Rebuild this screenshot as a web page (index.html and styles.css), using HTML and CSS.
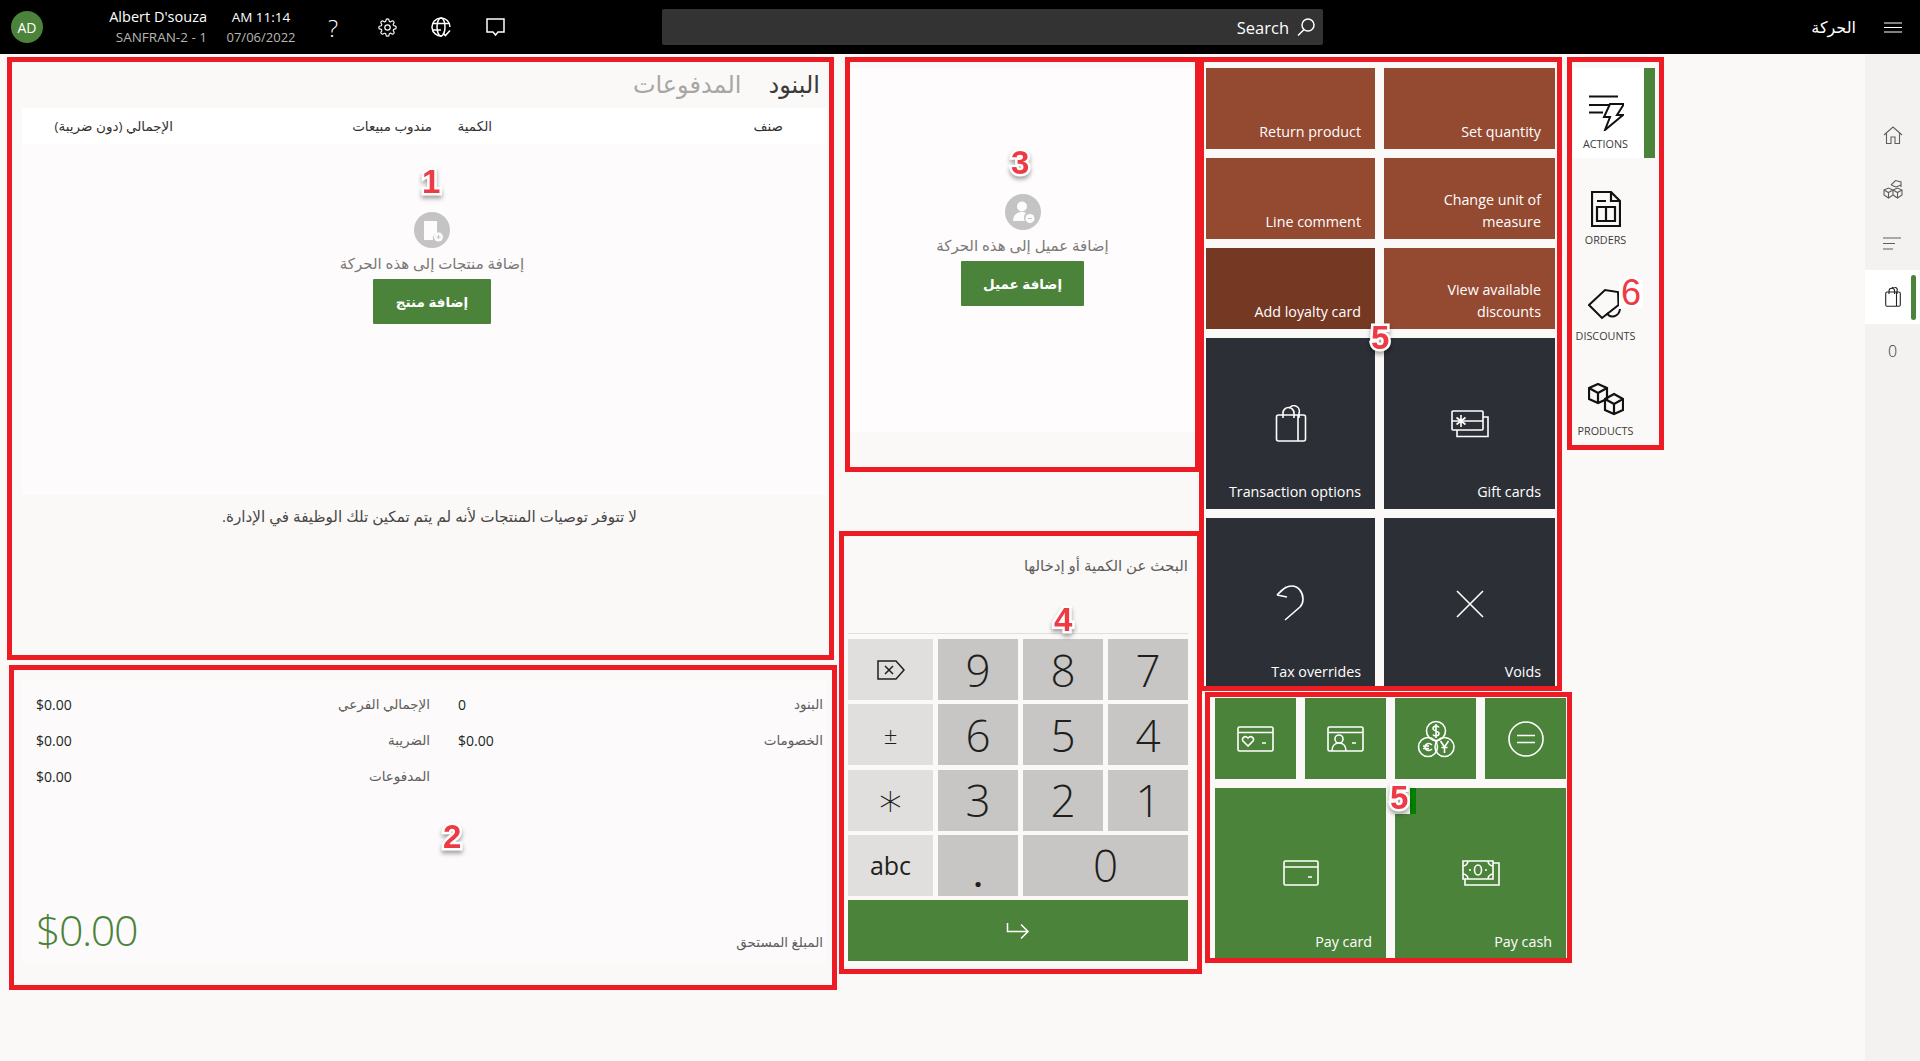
FILE: index.html
```html
<!DOCTYPE html>
<html lang="ar">
<head>
<meta charset="utf-8">
<title>الحركة</title>
<link rel="stylesheet" href="styles.css">
</head>
<body>
<header class="topbar">
  <div class="avatar">AD</div>
  <div class="user"><div class="bar-main">Albert D'souza</div><div class="bar-sub">SANFRAN-2 - 1</div></div>
  <div class="clock"><div class="bar-main bar-time">AM 11:14</div><div class="bar-sub">07/06/2022</div></div>
  <div class="bar-icons">
    <div class="bar-icon help">?</div>
    <div class="bar-icon"><svg width="19" height="19" viewBox="0 0 24 24" class="line"><circle cx="12" cy="12" r="3.4"/><path d="M19.4 15a1.65 1.65 0 0 0 .33 1.82l.06.06a2 2 0 0 1 0 2.83 2 2 0 0 1-2.83 0l-.06-.06a1.65 1.65 0 0 0-1.82-.33 1.65 1.65 0 0 0-1 1.51V21a2 2 0 0 1-2 2 2 2 0 0 1-2-2v-.09A1.65 1.65 0 0 0 9 19.4a1.65 1.65 0 0 0-1.82.33l-.06.06a2 2 0 0 1-2.83 0 2 2 0 0 1 0-2.83l.06-.06a1.65 1.65 0 0 0 .33-1.82 1.65 1.65 0 0 0-1.51-1H3a2 2 0 0 1-2-2 2 2 0 0 1 2-2h.09A1.65 1.65 0 0 0 4.6 9a1.65 1.65 0 0 0-.33-1.82l-.06-.06a2 2 0 0 1 0-2.83 2 2 0 0 1 2.83 0l.06.06a1.65 1.65 0 0 0 1.82.33H9a1.65 1.65 0 0 0 1-1.51V3a2 2 0 0 1 2-2 2 2 0 0 1 2 2v.09a1.65 1.65 0 0 0 1 1.51 1.65 1.65 0 0 0 1.82-.33l.06-.06a2 2 0 0 1 2.83 0 2 2 0 0 1 0 2.83l-.06.06a1.65 1.65 0 0 0-.33 1.82V9a1.65 1.65 0 0 0 1.51 1H21a2 2 0 0 1 2 2 2 2 0 0 1-2 2h-.09a1.65 1.65 0 0 0-1.51 1z"/></svg></div>
    <div class="bar-icon"><svg width="20" height="20" viewBox="0 0 20 20" class="line"><path d="M11 18.9A9 9 0 1 1 19 10"/><ellipse cx="10" cy="10" rx="4" ry="9"/><path d="M2 6.5h16M1.3 13H10"/><path d="M12 16l2.4 2.6L19 13.5"/></svg></div>
    <div class="bar-icon"><svg width="19" height="19" viewBox="0 0 19 19" class="line"><path d="M1 1h17v13h-6l-2.500 3-2.500-3H1z"/></svg></div>
  </div>
  <div class="searchbox">
    <span class="search-text">Search</span>
    <svg width="20" height="18" viewBox="0 0 20 18" class="line"><circle cx="12" cy="7" r="6"/><path d="M8 11.500L2 17.500"/></svg>
  </div>
  <div class="page-title" dir="rtl">الحركة</div>
  <div class="burger"><svg width="18" height="11" viewBox="0 0 18 11" class="line hair"><path d="M0 1h18M0 5.500h18M0 10h18"/></svg></div>
</header>

<div class="workspace">
  <main class="columns">
    <section class="col-lines">
      <div class="tabs" dir="rtl"><span class="tab tab-on">البنود</span><span class="tab">المدفوعات</span></div>
      <div class="lines-head" dir="rtl"><span>صنف</span><span>الكمية</span><span>مندوب مبيعات</span><span>الإجمالي (دون ضريبة)</span></div>
      <div class="empty-lines">
        <div class="empty-disc"><svg width="36" height="36" viewBox="0 0 36 36"><circle cx="18" cy="18" r="18" class="disc"/><path d="M10 9h13v12a6 6 0 0 0-4 7h-9z" class="disc-fill"/><circle cx="24.500" cy="25" r="4.500" class="disc-fill"/><path d="M22.500 25h4M24.500 23v4" class="disc-mark"/></svg></div>
        <p class="empty-text" dir="rtl">إضافة منتجات إلى هذه الحركة</p>
        <button class="cta" dir="rtl">إضافة منتج</button>
      </div>
      <p class="reco" dir="rtl">لا تتوفر توصيات المنتجات لأنه لم يتم تمكين تلك الوظيفة في الإدارة.</p>
      <div class="totals" dir="rtl">
        <div class="tot-grid">
          <div class="tot-row"><span class="tot-label">البنود</span><span class="tot-val" dir="ltr">0</span></div>
          <div class="tot-row"><span class="tot-label">الإجمالي الفرعي</span><span class="tot-val" dir="ltr">$0.00</span></div>
          <div class="tot-row"><span class="tot-label">الخصومات</span><span class="tot-val" dir="ltr">$0.00</span></div>
          <div class="tot-row"><span class="tot-label">الضريبة</span><span class="tot-val" dir="ltr">$0.00</span></div>
          <div class="tot-row"></div>
          <div class="tot-row"><span class="tot-label">المدفوعات</span><span class="tot-val" dir="ltr">$0.00</span></div>
        </div>
        <div class="due"><span class="tot-label">المبلغ المستحق</span><span class="due-val" dir="ltr">$0.00</span></div>
      </div>
    </section>

    <section class="col-mid">
      <div class="customer">
        <div class="empty-disc"><svg width="36" height="36" viewBox="0 0 36 36"><circle cx="18" cy="18" r="18" class="disc"/><circle cx="17" cy="12.500" r="5" class="disc-fill"/><path d="M8 27c0-6 4-9 9-9 2 0 3 .5 4 1a6 6 0 0 0-1 8z" class="disc-fill"/><circle cx="25" cy="24.500" r="4.500" class="disc-fill"/><path d="M23 24.500h4" class="disc-mark"/></svg></div>
        <p class="empty-text" dir="rtl">إضافة عميل إلى هذه الحركة</p>
        <button class="cta cta-wide" dir="rtl">إضافة عميل</button>
      </div>
      <div class="numpad">
        <div class="qty" dir="rtl">البحث عن الكمية أو إدخالها</div>
        <div class="keys">
          <div class="key key-alt"><svg width="28" height="20" viewBox="0 0 28 20" class="line key-svg"><path d="M1 1h18l8 9-8 9H1z"/><path d="M8 6l8 8M16 6l-8 8"/></svg></div>
          <div class="key">9</div><div class="key">8</div><div class="key">7</div>
          <div class="key key-alt key-sym">±</div>
          <div class="key">6</div><div class="key">5</div><div class="key">4</div>
          <div class="key key-alt key-star">∗</div>
          <div class="key">3</div><div class="key">2</div><div class="key">1</div>
          <div class="key key-alt key-abc">abc</div>
          <div class="key key-dot">.</div>
          <div class="key key-zero">0</div>
          <div class="key key-enter"><svg width="24" height="18" viewBox="0 0 24 18" class="line"><path d="M1.500 1v8.500H22M15 2.500l7 7-7 7"/></svg></div>
        </div>
      </div>
    </section>

    <section class="col-tiles">
      <div class="tile-grid">
        <div class="tile brown"><span class="tile-text">Return product</span></div>
        <div class="tile brown"><span class="tile-text">Set quantity</span></div>
        <div class="tile brown"><span class="tile-text">Line comment</span></div>
        <div class="tile brown"><span class="tile-text">Change unit of measure</span></div>
        <div class="tile brown-dark"><span class="tile-text">Add loyalty card</span></div>
        <div class="tile brown"><span class="tile-text">View available discounts</span></div>
        <div class="tile dark"><svg width="32" height="38" viewBox="0 0 32 38" class="line thick tile-icon"><rect x="1.500" y="10" width="29" height="26" rx="2"/><path d="M23 10v26M8 13V8a5.500 5.500 0 0 1 11 0v5M14 3.500a5.500 5.500 0 0 1 10 4.500v5"/></svg><span class="tile-text">Transaction options</span></div>
        <div class="tile dark"><svg width="38" height="28" viewBox="0 0 38 28" class="line thick tile-icon"><rect x="1" y="1" width="31" height="19" rx="1"/><path d="M6 20v6.500h31V7h-5M1 11h31"/><path d="M10 5v12M5.500 7.500l9 7M14.500 7.500l-9 7"/></svg><span class="tile-text">Gift cards</span></div>
        <div class="tile dark"><svg width="30" height="38" viewBox="0 0 30 38" class="line thick tile-icon"><path d="M1 10L10 2M1 10l10 2M1 10C6 4 11 1 16 1c6 0 11 6 11 13 0 3-1 6-3 8L9 35"/></svg><span class="tile-text">Tax overrides</span></div>
        <div class="tile dark"><svg width="30" height="30" viewBox="0 0 30 30" class="line thick tile-icon"><path d="M2 2l26 26M28 2L2 28"/></svg><span class="tile-text">Voids</span></div>
      </div>
      <div class="pay-grid">
        <div class="tile green"><svg width="37" height="26" viewBox="0 0 37 26" class="line thick"><rect x="1" y="1" width="35" height="24" rx="1.500"/><path d="M1 6.500h35M25 17h4"/><path d="M11 20l-5-5c-2-3 2-6 5-3 3-3 7 0 5 3z"/></svg></div>
        <div class="tile green"><svg width="37" height="26" viewBox="0 0 37 26" class="line thick"><rect x="1" y="1" width="35" height="24" rx="1.500"/><path d="M1 6.500h35M25 17h4"/><circle cx="12" cy="13" r="4"/><path d="M5 25c0-5 3-8 7-8s7 3 7 8"/></svg></div>
        <div class="tile green"><svg width="38" height="38" viewBox="0 0 38 38" class="line thick"><circle cx="19" cy="11" r="9.500"/><circle cx="11" cy="27" r="9.500"/><circle cx="27.500" cy="27" r="9.500"/><path d="M22 7.500c-1-2-6-2-6 1s6 2 6 5-5 3-6 1M19 4v14M15 25c-3-3-7-1-7 2s4 5 7 2M6 26h6M6 28.500h6M23.500 21l4 6 4-6M27.500 27v6M24.500 27.500h6"/></svg></div>
        <div class="tile green"><svg width="36" height="36" viewBox="0 0 36 36" class="line thick"><circle cx="18" cy="18" r="17"/><path d="M9 14.500h18M9 21.500h18"/></svg></div>
        <div class="tile green big"><svg width="36" height="26" viewBox="0 0 36 26" class="line thick tile-icon"><rect x="1" y="1" width="34" height="24" rx="1.500"/><path d="M1 7h34M25 17h4"/></svg><span class="tile-text">Pay card</span></div>
        <div class="tile green big"><svg width="38" height="26" viewBox="0 0 38 26" class="line thick tile-icon"><path d="M3 1h28v18H1V1zM1 6a5 5 0 0 0 5-5M26 1a5 5 0 0 0 5 5M1 14a5 5 0 0 1 5 5M31 14a5 5 0 0 0-5 5M31 3h6v22H3v-6"/><ellipse cx="16" cy="10" rx="3.500" ry="5"/><path d="M7 10h2M23 10h2"/></svg><span class="tile-text">Pay cash</span></div>
      </div>
    </section>

    <nav class="col-nav">
      <div class="nav-item nav-on"><svg width="36" height="36" viewBox="0 0 36 36" class="line dark-line"><path d="M1 1.500h29M1 10h20M1 17.500h14"/><path d="M22 9h14l-7 11h6L17 35l5-13h-6z"/></svg><span class="nav-label">ACTIONS</span></div>
      <div class="nav-item"><svg width="30" height="36" viewBox="0 0 30 36" class="line dark-line w2"><path d="M1 1h19l9 9v25H1zM20 1v9h9M6 10h9M6 16h18v14H6zM15 16v14"/></svg><span class="nav-label">ORDERS</span></div>
      <div class="nav-item"><svg width="36" height="36" viewBox="0 0 36 36" class="line dark-line"><path d="M1 18L17 3l13 2 .5 13L14 31z"/><path d="M19 26c3 6 12 4 13-4"/></svg><span class="nav-label">DISCOUNTS</span></div>
      <div class="nav-item"><svg width="36" height="35" viewBox="0 0 36 35" class="line dark-line w2"><path d="M10 1l9 4v11l-9 4-9-4V5zM1 5l9 5 9-5M10 10v10"/><path d="M26 11l9 5v11l-9 4-9-4V16zM17 16l9 5 9-5M26 21v10"/></svg><span class="nav-label">PRODUCTS</span></div>
    </nav>
  </main>

  <aside class="rail">
    <div class="rail-item"><svg width="20" height="20" viewBox="0 0 20 20" class="line gray-line"><path d="M1 10l9-8 9 8M3.500 8.500V18.500H8V12h4v6.500h4.500V8.500"/></svg></div>
    <div class="rail-item"><svg width="20" height="20" viewBox="0 0 20 20" class="line gray-line"><path d="M1 11l4.500-2L10 11v5l-4.500 3L1 16zM1 11l4.500 2.500L10 11M5.500 13.500V19M10 11l4.500-2 4.500 2v5l-4.500 3L10 16M10 11l4.500 2.500L19 11M14.500 13.500V19M8 6l4.500-4.500L18 3v5M8 6l5 2 5-2"/></svg></div>
    <div class="rail-item"><svg width="19" height="13" viewBox="0 0 19 13" class="line gray-line"><path d="M0 1h18M0 6.500h12M0 12h10"/></svg></div>
    <div class="rail-item rail-on"><svg width="16" height="20" viewBox="0 0 16 20" class="line dark-line thin"><rect x=".7" y="5" width="14.600" height="14.300" rx="1.500"/><path d="M11.500 5v14M4 7V4a2.800 2.800 0 0 1 5.600 0v3M7 1.500A2.800 2.800 0 0 1 12 4v3"/></svg></div>
    <div class="rail-item rail-count">0</div>
  </aside>
</div>

<div class="note box-lines"></div>
<div class="note box-totals"></div>
<div class="note box-customer"></div>
<div class="note box-numpad"></div>
<div class="note box-tiles"></div>
<div class="note box-pay"></div>
<div class="note box-nav"></div>
<span class="mark mark-1">1</span>
<span class="mark mark-2">2</span>
<span class="mark mark-3">3</span>
<span class="mark mark-4">4</span>
<span class="mark mark-5a">5</span>
<span class="patch"></span>
<span class="mark mark-5b">5</span>
<span class="patch6"></span>
<span class="mark mark-6">6</span>
</body>
</html>
```
FILE: styles.css
```css
* { box-sizing: border-box; }
html, body { margin: 0; height: 100%; }
body {
  width: 1920px;
  height: 1061px;
  overflow: hidden;
  position: relative;
  background: #faf9f8;
  color: #201f1e;
  font-family: "Open Sans", "DejaVu Sans", sans-serif;
  font-size: 14px;
}
p { margin: 0; }
.line { fill: none; stroke: #fff; stroke-width: 1.5; display: block; }
.hair { stroke-width: 1; }
.thick { stroke-width: 1.6; }
.dark-line { stroke: #111; stroke-width: 2; }
.dark-line.w2 { stroke-width: 2.2; }
.dark-line.thin { stroke-width: 1.1; stroke: #222; }
.gray-line { stroke: #605e5c; stroke-width: 1.1; }

/* top bar */
.topbar { height: 54px; background: #000; color: #fff; display: flex; align-items: center; padding-left: 11px; }
.avatar { width: 32px; height: 32px; border-radius: 50%; background: #4c833b; display: flex; align-items: center; justify-content: center; font-size: 14px; }
.user { width: 100px; margin-left: 64px; text-align: right; }
.clock { width: 80px; margin-left: 14px; text-align: center; }
.bar-main { font-size: 14.500px; line-height: 20px; white-space: nowrap; margin-top: -1px; }
.bar-time { font-size: 13.500px; }
.bar-sub { font-size: 13px; line-height: 20px; color: #b8b6b4; white-space: nowrap; }
.user .bar-sub { font-size: 13.500px; }
.bar-icons { display: flex; margin-left: 5px; }
.bar-icon { width: 54px; height: 54px; display: flex; align-items: center; justify-content: center; }
.help { font-size: 24px; font-weight: 300; }
.searchbox { width: 661px; height: 36px; margin-left: 140px; background: #333; border-radius: 2px; display: flex; align-items: center; justify-content: flex-end; padding-right: 7px; gap: 7px; }
.search-text { font-size: 16.500px; }
.page-title { margin-left: auto; margin-right: 9px; font-size: 16px; }
.burger { width: 55px; display: flex; justify-content: center; }

/* working area */
.workspace { display: flex; height: 1007px; }
.columns { width: 1865px; display: flex; padding: 14px 0 0 22px; }
.col-lines { width: 805px; }
.col-mid { width: 347px; margin-left: 21px; }
.col-tiles { width: 360px; margin-left: 11px; }
.col-nav { width: 82px; margin-left: 7px; }

/* lines */
.tabs { height: 40px; display: flex; gap: 27px; padding-right: 7px; align-items: center; padding-bottom: 10px; }
.tab { font-size: 24px; color: #a8a6a4; }
.tab-on { color: #3b3a39; }
.lines-head { height: 36px; background: #fff; display: grid; grid-template-columns: 291px 60px 259px 151px; padding-right: 44px; align-items: center; font-size: 13.500px; white-space: nowrap; color: #323130; }
.empty-lines { height: 351px; background: #fdfbfb; padding: 68px 0 0 15px; display: flex; flex-direction: column; align-items: center; }
.empty-disc { width: 36px; height: 36px; }
.disc { fill: #c4c4c4; }
.disc-fill { fill: #fdfbfb; }
.disc-mark { stroke: #c4c4c4; stroke-width: 1; fill: none; }
.empty-text { font-size: 15px; line-height: 20px; color: #7a7876; margin: 5px 0 6px; white-space: nowrap; }
.cta { width: 118px; height: 45px; background: #4c833b; color: #fff; border: 0; border-radius: 1px; font: bold 13.500px "Open Sans", "DejaVu Sans", sans-serif; padding: 0; }
.cta-wide { width: 123px; }
.reco { text-align: center; padding-left: 10px; font-size: 15.200px; line-height: 20px; margin-top: 11px; color: #484644; }

/* totals */
.totals { height: 283px; margin-top: 154px; background: #fcfafa; padding: 6px 4px 0 14px; display: flex; flex-direction: column; }
.tot-grid { display: grid; grid-template-columns: 365px 394px; column-gap: 28px; grid-auto-rows: 36px; }
.tot-row { display: flex; justify-content: space-between; align-items: center; }
.tot-label { font-size: 13.500px; color: #605e5c; }
.tot-val { font-size: 14px; color: #201f1e; }
.due { margin-top: auto; display: flex; justify-content: space-between; align-items: flex-end; padding-bottom: 3px; }
.due .tot-label { padding-bottom: 9px; }
.due-val { font-size: 43px; font-weight: 300; letter-spacing: -1.500px; line-height: 60px; color: #4c833b; }

/* customer + numpad */
.customer { height: 364px; margin-left: 2px; background: #fefcfc; padding-top: 126px; display: flex; flex-direction: column; align-items: center; }
.customer .empty-text { margin: 5px 0 6px; }
.numpad { padding-top: 124px; }
.qty { width: 340px; text-align: right; font-size: 15px; line-height: 20px; height: 79px; margin-top: -1px; color: #605e5c; border-bottom: 1px solid #e1dfdd; }
.keys { margin-top: 5px; width: 340px; display: grid; grid-template-columns: 85px 80px 80px 80px; grid-auto-rows: 61px; gap: 4.250px 5px; }
.key { background: #c8c6c4; display: flex; align-items: center; justify-content: center; font-size: 44px; font-weight: 300; color: #201f1e; }
.key-alt { background: #e1dfdd; font-size: 24px; }
.key-svg { stroke: #201f1e; }
.key-sym { font-size: 24px; }
.key-star { font-family: "DejaVu Sans", sans-serif; font-size: 46px; }
.key-abc { font-size: 25px; font-weight: 400; }
.key-dot { font-size: 30px; font-weight: 700; padding-top: 20px; }
.key-zero { grid-column: span 2; }
.key-enter { grid-column: 1 / -1; background: #4c833b; }

/* tiles */
.tile-grid { display: grid; grid-template-columns: 169px 171px; grid-template-rows: 81px 81px 81px 171px 171px; gap: 9px; }
.tile { position: relative; color: #fff; display: flex; align-items: center; justify-content: center; }
.tile-text { position: absolute; right: 14px; bottom: 6px; left: 14px; text-align: right; font-size: 14.300px; line-height: 22px; }
.brown { background: #944931; }
.brown-dark { background: #753823; }
.dark { background: #2d2f36; }
.green { background: #4c833b; }
.pay-grid { display: grid; grid-template-columns: repeat(4, 81px); grid-template-rows: 81px 170px; gap: 9px; padding-left: 9px; margin-top: 9px; }
.big { grid-column: span 2; }
.big .tile-text { bottom: 5px; }

/* nav tabs */
.nav-item { height: 96px; padding: 27px 17px 0 0; display: flex; flex-direction: column; align-items: center; gap: 5px; }
.nav-on { height: 90px; margin-bottom: 6px; background: #fff; border-right: 11px solid #4c833b; padding-right: 6px; }
.nav-item svg { flex: none; }
.nav-label { font-size: 10.800px; line-height: 16px; color: #3b3a39; }

/* side rail */
.rail { width: 55px; background: #f3f2f1; padding-top: 54px; }
.rail-item { height: 54px; display: flex; align-items: center; justify-content: center; position: relative; }
.rail-on { background: #fff; }
.rail-on::after { content: ""; position: absolute; right: 4px; top: 5px; width: 5px; height: 45px; border-radius: 3px; background: #4c833b; }
.rail-count { font-size: 16px; color: #323130; font-weight: 300; }

/* annotation overlay */
.note { position: absolute; border: 5px solid #ed1c24; }
.box-lines { left: 7px; top: 57px; width: 827px; height: 603px; }
.box-totals { left: 9px; top: 665px; width: 828px; height: 325px; }
.box-customer { left: 845px; top: 57px; width: 355px; height: 415px; }
.box-numpad { left: 839px; top: 531px; width: 363px; height: 443px; }
.box-tiles { left: 1199px; top: 57px; width: 363px; height: 634px; }
.box-pay { left: 1205px; top: 692px; width: 367px; height: 271px; }
.box-nav { left: 1567px; top: 57px; width: 97px; height: 393px; }
.mark {
  position: absolute;
  font: 700 33px/36px "Liberation Sans", sans-serif;
  color: #ed3a44;
  -webkit-text-stroke: 5px #fff;
  paint-order: stroke fill;
  filter: drop-shadow(0 3px 2px rgba(0, 0, 0, .35));
}
.mark-1 { left: 422px; top: 164px; }
.mark-2 { left: 443px; top: 819px; }
.mark-3 { left: 1011px; top: 145px; }
.mark-4 { left: 1054px; top: 602px; }
.mark-5a { left: 1371px; top: 320px; }
.mark-5b { left: 1390px; top: 780px; }
.mark-6 { left: 1621px; top: 275px; font-weight: 400; font-size: 36px; filter: none; }
.patch { position: absolute; left: 1387px; top: 788px; width: 29px; height: 26px; background: linear-gradient(to right, #faf9f8 23px, #008000 23px); }
.patch6 { position: absolute; left: 1619px; top: 280px; width: 24px; height: 28px; background: #fff; }
```
